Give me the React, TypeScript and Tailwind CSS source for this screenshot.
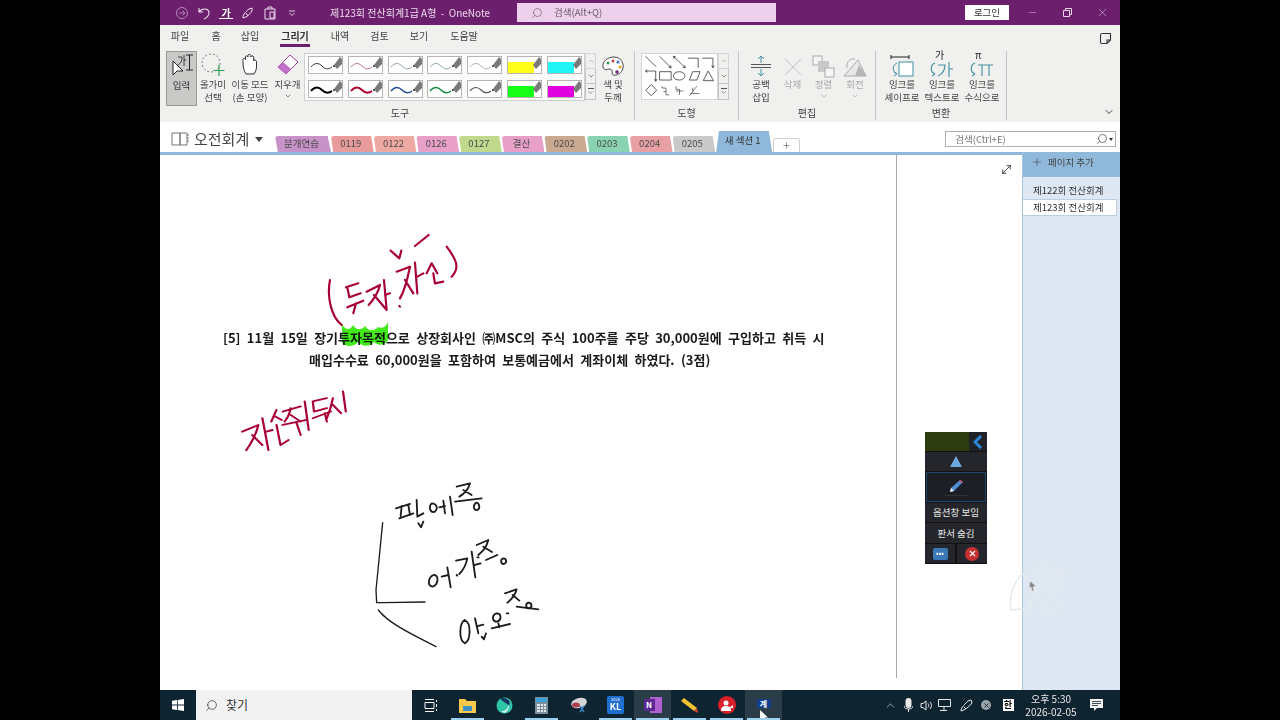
import { ChevronDown, ChevronUp, Minus, MoveDiagonal, Plus, Search, X } from 'lucide-react';

const menus = [
  { label: '파일', w: 'w-[40px]' },
  { label: '홈', w: 'w-[32px]' },
  { label: '삽입', w: 'w-[36px]' },
  { label: '그리기', w: 'w-[54px]', active: true },
  { label: '내역', w: 'w-[36px]' },
  { label: '검토', w: 'w-[43px]' },
  { label: '보기', w: 'w-[36px]' },
  { label: '도움말', w: 'w-[54px]' },
];

const penRows = [
  [
    { color: '#333333', size: 1 },
    { color: '#b57a88', size: 1 },
    { color: '#8fa3a3', size: 1 },
    { color: '#86a898', size: 1 },
    { color: '#b0b0b0', size: 1 },
    { color: '#ffff1a', fill: true },
    { color: '#22f5f5', fill: true },
  ],
  [
    { color: '#000000', size: 2 },
    { color: '#b0002e', size: 2 },
    { color: '#20508f', size: 1.5 },
    { color: '#128a44', size: 1.5 },
    { color: '#555555', size: 1.2 },
    { color: '#16ff16', fill: true },
    { color: '#e000e0', fill: true },
  ],
];

const tabs = [
  { label: '분개연습', bg: 'bg-[#c792c7]', w: 'w-[56px]' },
  { label: '0119', bg: 'bg-[#e99a9a]', w: 'w-[42.7px]' },
  { label: '0122', bg: 'bg-[#eeaaa2]', w: 'w-[42.7px]' },
  { label: '0126', bg: 'bg-[#e8a0c8]', w: 'w-[42.7px]' },
  { label: '0127', bg: 'bg-[#c0d98c]', w: 'w-[42.7px]' },
  { label: '결산', bg: 'bg-[#e8a0c8]', w: 'w-[42.7px]' },
  { label: '0202', bg: 'bg-[#c9a98f]', w: 'w-[42.7px]' },
  { label: '0203', bg: 'bg-[#8ad3b2]', w: 'w-[42.7px]' },
  { label: '0204', bg: 'bg-[#e8a0a4]', w: 'w-[42.7px]' },
  { label: '0205', bg: 'bg-[#c9c9c9]', w: 'w-[42.7px]' },
];

function PenSwatch({ color, size, fill }: { color: string; size?: number; fill?: boolean }) {
  return (
    <div className="w-[35px] h-[18px] bg-white border border-[#b5b5b5]">
      <svg width="33" height="16" viewBox="0 0 33 16">
        {fill ? (
          <rect x="0" y="5" width="26" height="11" fill={color} />
        ) : (
          <path d="M2 10C6 5 10 6 13 9S19 13 23 10" fill="none" stroke={color} strokeWidth={size} />
        )}
        {!fill && <circle cx="25" cy="9" r="1" fill="#222" />}
        <path d="M25 8L31 0L33 2L33 7L28 12Z" fill="#7a7a7a" />
      </svg>
    </div>
  );
}

function RibbonButton({ icon, lines, dim, caret, w }: { icon: React.ReactNode; lines: string[]; dim?: boolean; caret?: boolean; w: string }) {
  return (
    <div className={`flex flex-col items-center ${w}`}>
      <div className="h-[27px] flex items-center justify-center">{icon}</div>
      {lines.map((line) => (
        <div key={line} className={`text-[9.5px] leading-[13px] whitespace-nowrap ${dim ? 'text-[#a8a8a8]' : 'text-[#444]'}`}>
          {line}
        </div>
      ))}
      {caret && <ChevronDown size={8} className={dim ? 'text-[#a8a8a8] mt-[1px]' : 'text-[#444] mt-[1px]'} />}
    </div>
  );
}

function GalleryScroll() {
  return (
    <div className="flex flex-col w-[11px] h-[47px] text-[#555]">
      <div className="h-[16px] border border-[#d5d5d5] flex items-center justify-center text-[#aaa]">
        <ChevronUp size={8} />
      </div>
      <div className="h-[15px] border border-[#c5c5c5] border-t-0 flex items-center justify-center">
        <ChevronDown size={8} />
      </div>
      <div className="h-[16px] border border-[#c5c5c5] border-t-0 flex flex-col items-center justify-center">
        <div className="w-[6px] h-px bg-[#555] mb-[1px]" />
        <ChevronDown size={7} className="-mt-[1px]" />
      </div>
    </div>
  );
}

function GroupLabel({ children }: { children: React.ReactNode }) {
  return <div className="mt-auto mb-[1px] text-center text-[10px] leading-[13px] text-[#444]">{children}</div>;
}

function ShapesIcon() {
  return (
    <svg width="77" height="47" viewBox="8 25 232 140" fill="none" stroke="#333" strokeWidth="2.4" className="bg-white shrink-0 border border-[#d5d5d5]">
      <path d="M18 32L52 65M62 32L98 68M98 68L90 66M98 68L96 60M105 32L142 68M105 32L113 34M105 32L107 40M142 68L134 66M142 68L140 60" />
      <path d="M150 38H182V68M195 38H228V68M228 68L224 61M228 68L232 61" />
      <path d="M18 78H50V110M18 78L24 74M18 78L24 82M50 110L46 103M50 110L54 103" />
      <path d="M62 80H98V106H62ZM155 106L165 80H188L178 106ZM198 108L213 78L230 108Z" />
      <ellipse cx="123" cy="93" rx="18" ry="13" />
      <path d="M36 120L53 138L36 155L19 138Z" />
      <path d="M70 125V131H82V152H92M82 142H74" strokeWidth="2" />
      <path d="M113 125V135H124V152M113 140H136" strokeWidth="2" />
      <path d="M155 155L178 125M165 130V142M158 148H186" strokeWidth="2" />
    </svg>
  );
}

function InkConvertIcon({ top }: { top: string }) {
  return (
    <div className="relative w-[30px] h-[26px]">
      <div className="absolute top-[-3px] left-[8px] text-[10px] leading-[12px] text-[#222]">{top}</div>
      <svg width="30" height="26" viewBox="0 0 30 26" fill="none" stroke="#3f8fa0" strokeWidth="1.1">
        <path d="M8 11C3 13 3 20 8 22M8 22L5 20M8 22L5 24" />
        {top === 'π' ? (
          <path d="M11 13H26M15 13V24M22 13V24" />
        ) : (
          <path d="M11 13H18C18 18 15 22 11 24M22 10V25M22 17H26" />
        )}
      </svg>
    </div>
  );
}

function TaskIcon({ children, running, active }: { children: React.ReactNode; running?: boolean; active?: boolean }) {
  return (
    <div className={`relative w-[37px] h-[30px] shrink-0 flex items-center justify-center ${active ? 'bg-[#2a3c47]' : ''}`}>
      {children}
      {running && <div className="absolute bottom-0 left-[2px] right-[2px] h-[2px] bg-[#9bd0ef]" />}
    </div>
  );
}

export default function App() {
  return (
    <div className="w-[1280px] h-[720px] bg-black flex justify-center overflow-hidden font-['Noto_Sans_CJK_KR','Liberation_Sans',sans-serif]">
      <div className="w-[960px] h-[720px] flex flex-col bg-white relative">
        {/* Title bar */}
        <div className="h-[25px] bg-[#6b1f6d] flex items-center text-[#ecdcec] relative">
          <div className="w-[170px] flex items-center pl-[15px] gap-[8px]">
            <svg width="14" height="14" viewBox="0 0 14 14" fill="none" stroke="#b78ab8" strokeWidth="1">
              <circle cx="7" cy="7" r="5.5" />
              <path d="M4 7H10M7.5 4.5L10 7L7.5 9.5" />
            </svg>
            <svg width="14" height="14" viewBox="0 0 14 14" fill="none" stroke="#f0e0f0" strokeWidth="1.1">
              <path d="M2 2V6H6M2 6C5 2 11 2 12 6C12.5 9 10 12 7 13" />
            </svg>
            <span className="w-[14px] text-[10px] leading-[11px] font-bold text-white border-b border-white text-center">가</span>
            <svg width="14" height="14" viewBox="0 0 14 14" fill="none" stroke="#f0e0f0" strokeWidth="1">
              <path d="M2 12C2 9 3 7 8 3L11 2L11 5C8 9 6 11 2 12ZM5 7L7 10" />
            </svg>
            <svg width="14" height="14" viewBox="0 0 14 14" fill="none" stroke="#f0e0f0" strokeWidth="1">
              <path d="M2 3H12V13H2ZM5 3V1H9V3M7 6H11V12H7Z" />
            </svg>
            <svg width="6" height="6" viewBox="0 0 6 6" fill="none" stroke="#e0c8e0" className="ml-[4px]">
              <path d="M0 1H6M0.5 3L3 5.5L5.5 3" />
            </svg>
          </div>
          <div className="w-[158px] text-[10px] whitespace-pre">제123회 전산회계1급 A형  -  OneNote</div>
          <div className="ml-[29px] w-[259px] h-[19px] bg-[#ecd0ec] flex items-center pl-[14px] gap-[11px] text-[#6b5a6b]">
            <Search size={12} className="-scale-x-100" strokeWidth={1.3} />
            <span className="text-[9.5px]">검색(Alt+Q)</span>
          </div>
          <div className="ml-[189px] w-[44px] h-[15px] bg-white text-[#333] text-[9.5px] leading-[15px] text-center">로그인</div>
          <div className="flex items-center ml-[6px] text-[#e6d6e6]">
            <div className="w-[35px] flex justify-center"><Minus size={11} strokeWidth={1} /></div>
            <div className="w-[35px] flex justify-center">
              <svg width="9" height="9" viewBox="0 0 9 9" fill="none" stroke="currentColor">
                <path d="M2.5 2.5V.5H8.5V6.5H6.5M.5 2.5H6.5V8.5H.5Z" />
              </svg>
            </div>
            <div className="w-[35px] flex justify-center"><X size={13} strokeWidth={1} /></div>
          </div>
        </div>

        {/* Menu row */}
        <div className="h-[22px] bg-[#f0f0ee] flex items-start text-[10px] text-[#444] relative">
          {menus.map((menu) => (
            <div key={menu.label} className={`${menu.w} h-[22px] flex justify-center pt-[3px] ${menu.active ? 'font-bold text-[#333]' : ''}`}>
              <span className={`h-[19px] ${menu.active ? 'border-b-[3px] border-[#6b1f6d] px-[1px]' : ''}`}>{menu.label}</span>
            </div>
          ))}
          <svg width="13" height="13" viewBox="0 0 13 13" fill="none" stroke="#333" strokeWidth="1.1" className="ml-auto mr-[8px] mt-[7px]">
            <path d="M1.5 3.5C1.5 1.5 2 1.5 3 1.5H11.5V8L8 11.5H3C2 11.5 1.5 11 1.5 10ZM8 11.5V8H11.5" />
          </svg>
        </div>

        {/* Ribbon */}
        <div className="h-[75px] bg-[#f0f0ee] flex pl-[6px] shadow-[0_1px_2px_rgba(0,0,0,0.15)] relative">
          <div className="w-[469px] flex flex-col border-r border-[#c5c5c5] mt-[4px] mb-[2px]">
            <div className="flex items-start">
              <div className="w-[31px] h-[55px] bg-[#c9c9c7] border border-[#9a9a98] flex flex-col items-center text-[9.5px] text-[#333]">
                <svg width="26" height="26" viewBox="0 0 26 26" fill="none" stroke="#222" strokeWidth="1">
                  <path d="M4 9V23L8 19H14Z" fill="white" />
                  <path d="M17 3H24M20.5 3V18M17 18H24" />
                  <path d="M9 5H13C13 9 12 11 9 13M15 3V14M15 8H17" strokeWidth="0.8" />
                </svg>
                <span className="mt-[1px] leading-[13px]">입력</span>
              </div>
              <RibbonButton
                w="w-[32px]"
                lines={['올가미', '선택']}
                icon={
                  <svg width="26" height="26" viewBox="0 0 26 26" fill="none">
                    <circle cx="11" cy="11" r="9" stroke="#777" strokeDasharray="2 2" />
                    <path d="M19 13V24M13.5 18.5H24.5" stroke="#2f9e4f" strokeWidth="1.2" />
                  </svg>
                }
              />
              <RibbonButton
                w="w-[42px]"
                lines={['이동 모드', '(손 모양)']}
                icon={
                  <svg width="18" height="23" viewBox="0 0 18 23" fill="white" stroke="#333" strokeWidth="1">
                    <path d="M5 21C3 18 2 14 2 10V6.5C2 5 4 5 4.5 6.5V4C4.5 2.5 6.7 2.5 7 4V2.5C7 1 9.5 1 9.8 2.5V4C10 2.5 12.5 2.5 12.7 4V8C13 6.5 15.5 7 15.5 8.5V13C15.5 16 15 18 13 21Z" />
                  </svg>
                }
              />
              <RibbonButton
                w="w-[33px]"
                caret
                lines={['지우개']}
                icon={
                  <svg width="22" height="22" viewBox="0 0 22 22">
                    <path d="M1 13L13 1L21 8L9 20Z" fill="white" stroke="#a040a0" />
                    <path d="M1 13L6 8L14 15L9 20Z" fill="#c070c8" />
                  </svg>
                }
              />
              <div className="flex flex-col justify-between w-[281px] h-[48px] mt-[2px] bg-[#fafaf9] border border-[#d0d0d0] pl-[3px] py-[2px]">
                {penRows.map((row, r) => (
                  <div key={r} className="flex gap-[4.8px]">
                    {row.map((pen, i) => (
                      <PenSwatch key={i} color={pen.color} size={pen.size} fill={pen.fill} />
                    ))}
                  </div>
                ))}
              </div>
              <div className="mt-[2px]"><GalleryScroll /></div>
              <RibbonButton
                w="w-[34px]"
                lines={['색 및', '두께']}
                icon={
                  <svg width="24" height="24" viewBox="0 0 24 24" fill="white" stroke="#444" strokeWidth="1" className="mt-[5px]">
                    <path d="M2 12C1 6 7 2 13 2C19 2 23 7 22 13C21 18 16 21 12 20C10 19 13 15 9 14C6 14 3 16 2 12Z" />
                    <circle cx="7" cy="8" r="1.5" fill="#2f9e4f" stroke="none" />
                    <circle cx="12" cy="6" r="1.5" fill="#d83b3b" stroke="none" />
                    <circle cx="17" cy="7" r="1.5" fill="#2f6fd8" stroke="none" />
                    <circle cx="19" cy="12" r="1.5" fill="#e0a020" stroke="none" />
                    <circle cx="16" cy="17" r="1.8" fill="#702080" stroke="none" />
                  </svg>
                }
              />
            </div>
            <GroupLabel>도구</GroupLabel>
          </div>

          <div className="w-[104px] flex flex-col border-r border-[#c5c5c5] mt-[4px] mb-[2px]">
            <div className="flex pl-[6px] mt-[2px]">
              <ShapesIcon />
              <GalleryScroll />
            </div>
            <GroupLabel>도형</GroupLabel>
          </div>

          <div className="w-[137px] flex flex-col border-r border-[#c5c5c5] mt-[4px] mb-[2px]">
            <div className="flex pl-[6px]">
              <RibbonButton
                w="w-[32px]"
                lines={['공백', '삽입']}
                icon={
                  <svg width="22" height="24" viewBox="0 0 22 24" fill="none" stroke="#3f8fa0" className="mt-[2px]">
                    <path d="M11 2V9M8 5L11 2L14 5M11 15V22M8 19L11 22L14 19" />
                    <path d="M1 10.5H21M1 13.5H21" stroke="#555" />
                  </svg>
                }
              />
              <RibbonButton
                w="w-[31px]"
                dim
                lines={['삭제']}
                icon={
                  <svg width="18" height="18" viewBox="0 0 18 18" stroke="#c2c2c2" className="mt-[4px]">
                    <path d="M1 1L17 17M17 1L1 17" />
                  </svg>
                }
              />
              <RibbonButton
                w="w-[31px]"
                dim
                caret
                lines={['정렬']}
                icon={
                  <svg width="23" height="23" viewBox="0 0 23 23" stroke="#aaa" className="mt-[4px]">
                    <rect x="1" y="1" width="9" height="9" fill="#f5f5f5" />
                    <rect x="6" y="6" width="11" height="11" fill="#c8c8c8" stroke="none" />
                    <rect x="13" y="13" width="9" height="9" fill="#f5f5f5" />
                  </svg>
                }
              />
              <RibbonButton
                w="w-[32px]"
                dim
                caret
                lines={['회전']}
                icon={
                  <svg width="24" height="20" viewBox="0 0 24 20" fill="none" stroke="#aaa" className="mt-[4px]">
                    <path d="M1 19L15 3L23 19Z" fill="#e8e8e8" />
                    <path d="M12 19L16 8L23 19Z" fill="#b5b5b5" stroke="none" />
                    <path d="M4 11C3 5 7 1 12 2" />
                  </svg>
                }
              />
            </div>
            <GroupLabel>편집</GroupLabel>
          </div>

          <div className="w-[131px] flex flex-col border-r border-[#c5c5c5] mt-[4px] mb-[2px]">
            <div className="flex pl-[6px]">
              <RibbonButton
                w="w-[40px]"
                lines={['잉크를', '셰이프로']}
                icon={
                  <svg width="24" height="24" viewBox="0 0 24 24" fill="none" className="mt-[3px]">
                    <path d="M1 1V5M19 1V5M1 3H19" stroke="#222" />
                    <rect x="9" y="8" width="14" height="14" stroke="#3f8fa0" fill="white" />
                    <path d="M7 9C2 11 2 18 7 20M7 20L4 18M7 20L4 22" stroke="#3f8fa0" />
                  </svg>
                }
              />
              <RibbonButton w="w-[40px]" lines={['잉크를', '텍스트로']} icon={<InkConvertIcon top="가" />} />
              <RibbonButton w="w-[40px]" lines={['잉크를', '수식으로']} icon={<InkConvertIcon top="π" />} />
            </div>
            <GroupLabel>변환</GroupLabel>
          </div>

          <ChevronDown size={12} className="ml-auto mr-[5px] mt-[59px] text-[#444]" />
        </div>

        {/* Section tabs */}
        <div className="h-[30px] bg-white flex items-end relative">
          <div className="w-[115px] h-[30px] shrink-0 flex items-center pl-[11px] pt-[3px] text-[#444]">
            <svg width="18" height="14" viewBox="0 0 18 14" fill="none" stroke="#777" className="shrink-0">
              <path d="M1 1H9V13H1ZM9 1H16V13H9ZM16 3H18M16 6H18M16 9H18" />
            </svg>
            <span className="ml-[5px] text-[15px] leading-[20px] whitespace-nowrap">오전회계</span>
            <span className="ml-[6px] w-0 h-0 border-x-[4px] border-x-transparent border-t-[5px] border-t-[#444] mt-[2px] shrink-0" />
          </div>
          {tabs.map((tab) => (
            <div
              key={tab.label}
              className={`${tab.w} ${tab.bg} h-[16px] pr-[3px] text-[9.5px] leading-[14px] text-center text-[#4a4a4a] rounded-t-[3px] [clip-path:polygon(0_0,94%_0,100%_100%,5%_100%)]`}
            >
              {tab.label}
            </div>
          ))}
          <div className="w-[56px] h-[21px] ml-[1px] bg-[#8fb8da] pr-[3px] text-[9.5px] leading-[19px] text-center text-[#333] rounded-t-[4px] [clip-path:polygon(5%_0,94%_0,100%_100%,0_100%)]">
            새 섹션 1
          </div>
          <div className="w-[27px] h-[14px] ml-[1px] border border-b-0 border-[#d0d0d0] rounded-t-[3px] flex items-center justify-center text-[#444]">
            <Plus size={9} strokeWidth={1.5} />
          </div>
          <div className="ml-[145px] mb-[5px] w-[171px] h-[16px] border border-[#b0b0b0] flex items-center justify-between pl-[9px] pr-[2px] text-[#777]">
            <span className="text-[9.5px] leading-[14px]">검색(Ctrl+E)</span>
            <span className="flex items-center text-[#333]">
              <Search size={12} className="-scale-x-100" strokeWidth={1.3} />
              <span className="ml-[1px] w-0 h-0 border-x-[2px] border-x-transparent border-t-[3px] border-t-[#333]" />
            </span>
          </div>
        </div>
        <div className="h-[3px] bg-[#8fb8da]" />

        {/* Page area */}
        <div className="h-[535px] flex relative bg-white">
          <div className="w-[737px] flex relative">
            <div className="w-[736px] flex flex-col pt-[172px] text-[13px] leading-[22px] font-semibold text-[#1a1a1a] [word-spacing:3.4px]">
              <div className="pl-[63px] whitespace-nowrap">[5] 11월 15일 장기투자목적으로 상장회사인 ㈜MSC의 주식 100주를 주당 30,000원에 구입하고 취득 시</div>
              <div className="pl-[149px] whitespace-nowrap">매입수수료 60,000원을 포함하여 보통예금에서 계좌이체 하였다. (3점)</div>
            </div>
            <div className="w-px h-[523px] bg-[#a8a8a8]" />

            {/* Ink layer */}
            <svg width="737" height="535" viewBox="160 155 737 535" fill="none" strokeLinecap="round" strokeLinejoin="round" className="absolute left-0 top-0 mix-blend-multiply">
              <path d="M342 343V324C345 330 350 331 353 325C356 330 361 331 365 326C368 331 374 332 378 327C382 329 386 327 388 322V340C384 346 378 346 374 342C370 347 362 347 358 342C354 347 346 347 342 343Z" fill="#42ea1c" />
              <g transform="translate(230 230) scale(0.3333)" stroke="#a80034" strokeWidth="6.5">
                <path d="M300 150C292 190 298 255 335 285" />
                <path d="M348 172L385 160M352 172L358 202L392 190M352 232L400 212M378 220L370 250" />
                <path d="M410 185L450 165C445 185 430 210 416 225M432 195L470 240M462 150L470 240M465 195L480 190" />
                <path d="M508 228L510 230" />
                <path d="M482 62L508 85L514 62M500 125L540 110C532 150 522 185 510 205M525 150L550 190M555 98L562 190M562 140L580 130" />
                <path d="M555 48L596 15M590 130L605 100L622 130M610 130L615 160L640 155" />
                <path d="M650 50C672 80 695 110 665 140" />
              </g>
              <g transform="translate(210 220) scale(0.403 0.336)" stroke="#a80034" strokeWidth="5.5">
                <path d="M80 630L120 610C115 635 105 660 90 685M105 640L130 670M130 590L145 685M140 630L155 625" />
                <path d="M165 565L152 600M162 585L178 595M165 610L175 670L195 655" />
                <path d="M180 570L225 555M200 560C198 575 192 590 185 600M200 580L225 600M180 610L240 595M215 605L225 640" />
                <path d="M235 540L245 625" />
                <path d="M255 540L290 530M255 540L258 570L290 560M255 590L300 570M285 575L290 600" />
                <path d="M305 530C302 550 296 572 290 590M305 550L325 575M330 510L337 570" />
              </g>
              <g transform="translate(360 480) scale(0.3333)" stroke="#1c1c1c" strokeWidth="5.5">
                <path d="M68 128L48 330L50 368L70 368L195 366M55 390C85 430 160 465 228 500" strokeWidth="4" />
                <path d="M108 85L150 72M125 78L122 108M145 75L150 105M118 115L160 100M170 60L172 110L190 100M175 130L183 142L190 125" />
                <path d="M215 70C205 80 210 100 225 95C235 85 230 70 215 70ZM250 62L255 100M238 82L255 78M270 50L278 105" />
                <path d="M290 20L330 10C325 30 312 42 298 50M310 30L335 45M285 65L365 55" />
                <path d="M348 68C338 75 340 92 352 90C362 85 358 68 348 68Z" />
                <path d="M222 285C205 290 200 320 218 320C235 315 238 285 222 285ZM262 262L272 322M245 290L265 285M290 285L292 287" />
                <path d="M288 242L322 235C318 255 310 270 298 282M335 215L346 292M345 255L362 250M352 232L356 232" />
                <path d="M350 195L385 180C380 200 368 215 355 225M370 200L396 216M378 240L412 225" />
                <path d="M430 235C420 238 422 252 432 252C442 248 440 235 430 235Z" />
                <path d="M314 420C298 430 295 480 315 490C332 480 335 430 314 420ZM345 415L355 460M355 438L370 434M365 470L372 478L378 460" />
                <path d="M410 400C395 405 395 425 412 425C425 420 425 400 410 400ZM395 445L450 432M415 430L418 442M440 400L445 400" />
                <path d="M435 340L470 328C466 345 455 358 442 368M458 345L478 362M470 380L535 388" />
                <path d="M505 368C495 372 497 385 508 385C518 382 516 368 505 368Z" />
              </g>
            </svg>
          </div>

          <div className="w-[125px] flex justify-end pt-[8px] pr-[9px]">
            <MoveDiagonal size={13} strokeWidth={1.5} className="text-[#222]" />
          </div>

          {/* Page list */}
          <div className="w-[98px] bg-[#dde8f3] border-l border-[#a9c3da] -mt-[3px] flex flex-col text-[9.5px] text-[#333]">
            <div className="h-[25px] bg-[#8fb8da] flex items-start pt-[3px] pl-[8px] gap-[5px] text-[#444]">
              <Plus size={12} strokeWidth={1.2} className="mt-[1px]" />
              <span>페이지 추가</span>
            </div>
            <div className="h-[22px] pl-[10px] flex items-end leading-[17px]">제122회 전산회계</div>
            <div className="h-[17px] w-[94px] bg-white border border-[#b9cfe3] border-l-0 pl-[10px] leading-[15px]">제123회 전산회계</div>
          </div>

          {/* Floating pen toolbar */}
          <div className="absolute left-[765px] top-[277px] w-[62px] h-[132px] bg-[#111] flex flex-col gap-[1px] text-[9.5px] text-[#e8e8e8] text-center">
            <div className="flex h-[19px]">
              <div className="w-[44px] bg-[#2e3c10]" />
              <div className="flex-1 bg-[#1f2328] flex items-center justify-center">
                <svg width="10" height="14" viewBox="0 0 10 14" fill="none" stroke="#2a86d8" strokeWidth="3">
                  <path d="M8 1L2 7L8 13" />
                </svg>
              </div>
            </div>
            <div className="h-[19px] bg-[#24262b] flex items-center justify-center">
              <div className="w-0 h-0 border-x-[6px] border-x-transparent border-b-[11px] border-b-[#6ea8e0]" />
            </div>
            <div className="h-[30px] mx-[1px] bg-[#1c2026] border border-[#23466b] flex flex-col items-center justify-center">
              <svg width="16" height="16" viewBox="0 0 16 16">
                <path d="M2 14L3 10L12 2L15 4L6 13Z" fill="#4d8fd8" />
                <path d="M2 14L3 10L6 13Z" fill="#f2f2f2" />
                <path d="M12 2L15 4L14 5L11 3Z" fill="#e05050" />
              </svg>
              <div className="w-[22px] h-px bg-[#333] mt-[1px]" />
            </div>
            <div className="h-[19px] bg-[#24262b] leading-[19px]">옵션창 보임</div>
            <div className="h-[20px] bg-[#24262b] leading-[20px]">판서 숨김</div>
            <div className="flex h-[19px] gap-[2px]">
              <div className="w-[30px] bg-[#24262b] flex items-center justify-center">
                <div className="relative w-[15px] h-[12px] bg-[#3a78b8] rounded-[2px] text-[8px] leading-[9px] text-white">•••</div>
              </div>
              <div className="flex-1 bg-[#24262b] flex items-center justify-center">
                <div className="w-[14px] h-[14px] rounded-full bg-[#c83030] flex items-center justify-center">
                  <X size={9} strokeWidth={3} className="text-white" />
                </div>
              </div>
            </div>
          </div>

          {/* Faded radial menu and cursor */}
          <svg width="62" height="62" viewBox="0 0 62 62" fill="none" stroke="#e6eaed" className="absolute left-[849px] top-[409px]">
            <path d="M26 6C33 3 46 3 55 7L47 25C42 23 37 23 33 25Z" strokeWidth="1.5" />
            <path d="M14 10L28 25C22 30 22 38 22 44L2 46C0 32 4 18 14 10Z" strokeWidth="1.5" />
            <circle cx="40" cy="42" r="8" />
            <path d="M32 7H50M35 13H48" />
            <path d="M21 17L27 22L24 23L25 27L23 27L22 23L20 24Z" fill="#8a8a8a" stroke="#f0f0f0" strokeWidth="0.5" />
          </svg>
        </div>

        {/* Taskbar */}
        <div className="h-[30px] bg-[#0f2431] flex items-center relative">
          <div className="w-[36px] shrink-0 flex justify-center">
            <svg width="12" height="12" viewBox="0 0 12 12" fill="#fff">
              <path d="M0 1.8L5 1V5.6H0ZM5.8 .9L12 0V5.6H5.8ZM0 6.4H5V11L0 10.2ZM5.8 6.4H12V12L5.8 11.1Z" />
            </svg>
          </div>
          <div className="w-[216px] h-[30px] shrink-0 bg-[#f2f2f2] flex items-center pl-[9px] gap-[8px] text-[#333]">
            <Search size={13} className="-scale-x-100" strokeWidth={1.3} />
            <span className="text-[12px]">찾기</span>
          </div>
          <div className="flex">
            <TaskIcon>
              <svg width="13" height="13" viewBox="0 0 13 13" fill="none" stroke="#fff">
                <path d="M1 .5H10M1 3.5H10V9.5H1ZM1 12.5H10M12.5 1V3M12.5 5V8M12.5 10V12" />
              </svg>
            </TaskIcon>
            <TaskIcon running>
              <svg width="17" height="15" viewBox="0 0 17 15">
                <path d="M0 1H6L8 3H17V15H0Z" fill="#f6c94a" />
                <rect x="4" y="8" width="9" height="5" fill="#3f92c8" />
              </svg>
            </TaskIcon>
            <TaskIcon>
              <svg width="17" height="17" viewBox="0 0 17 17">
                <circle cx="8.5" cy="8.5" r="8" fill="#2ec4a8" />
                <path d="M4 1.5C9 0 16 3 13 9C11 6 7 5 4 1.5Z" fill="#17325e" />
                <path d="M5 14C9 15 13 11 12 7C14 10 12 15 8 16Z" fill="#eaf6f4" />
              </svg>
            </TaskIcon>
            <TaskIcon running>
              <svg width="13" height="17" viewBox="0 0 13 17">
                <rect width="13" height="17" fill="#7c8f9c" />
                <rect x="1" y="1" width="11" height="4" fill="#3aa0d8" />
                <path d="M2 7H5V9H2ZM6 7H8V9H6ZM9 7H11V9H9ZM2 10H5V12H2ZM6 10H8V12H6ZM9 10H11V12H9ZM2 13H5V15H2ZM6 13H8V15H6ZM9 13H11V15H9Z" fill="#e8e8e8" />
              </svg>
            </TaskIcon>
            <TaskIcon>
              <svg width="18" height="17" viewBox="0 0 18 17">
                <ellipse cx="9" cy="6" rx="8" ry="5" fill="#d5d5d8" transform="rotate(-15 9 6)" />
                <ellipse cx="6" cy="8" rx="4" ry="2.5" fill="#b04050" />
                <path d="M10 9L14 15M14 9L10 15" stroke="#3a7fc0" strokeWidth="1.5" />
              </svg>
            </TaskIcon>
            <TaskIcon running>
              <div className="w-[17px] h-[18px] rounded-[2px] bg-[#1f6fd0] text-white text-center">
                <div className="text-[4px] leading-[6px]">2026</div>
                <div className="text-[9px] leading-[10px] font-bold">KL</div>
              </div>
            </TaskIcon>
            <TaskIcon running active>
              <div className="relative w-[18px] h-[16px]">
                <div className="absolute right-0 top-0 w-[12px] h-[16px] bg-[#b060d0]" />
                <div className="absolute left-0 top-[2px] w-[11px] h-[12px] bg-[#5a2a90] text-white text-[8px] leading-[12px] font-bold text-center">N</div>
              </div>
            </TaskIcon>
            <TaskIcon running>
              <svg width="17" height="15" viewBox="0 0 17 15">
                <path d="M0 3L3 0L16 10L13 13Z" fill="#f2c230" />
                <path d="M13 13L16 10L17 15Z" fill="#d84a30" />
              </svg>
            </TaskIcon>
            <TaskIcon running>
              <div className="w-[18px] h-[18px] rounded-full bg-[#d8202a] flex items-center justify-center">
                <svg width="12" height="11" viewBox="0 0 12 11" fill="#fff">
                  <circle cx="5" cy="3" r="2.5" />
                  <path d="M0 11C0 7 2 6 5 6C8 6 10 7 10 11ZM8 8L12 5V8Z" />
                </svg>
              </div>
            </TaskIcon>
            <TaskIcon running active>
              <div className="w-[14px] h-[9px] -mt-[3px] bg-[#123f8a] text-white text-[8px] leading-[9px] font-bold text-center">계</div>
              <svg width="10" height="12" viewBox="0 0 10 12" className="absolute left-[14px] top-[20px]">
                <path d="M1 0V10L3.5 8L6 12H7.5L6 7.5H9Z" fill="#fff" />
              </svg>
            </TaskIcon>
          </div>

          <div className="flex items-center ml-[99px] text-[#e8e8e8]">
            <div className="w-[18px] flex justify-center"><ChevronUp size={13} strokeWidth={1.2} /></div>
            <div className="w-[18px] flex justify-center">
              <svg width="9" height="14" viewBox="0 0 9 14" fill="#e8e8e8">
                <rect x="1.5" y="0" width="6" height="10" rx="3" />
                <path d="M0 8C0 12 9 12 9 8M4.5 11V14" fill="none" stroke="#e8e8e8" />
              </svg>
            </div>
            <div className="w-[18px] flex justify-center">
              <svg width="13" height="11" viewBox="0 0 13 11" fill="none" stroke="#e8e8e8">
                <path d="M1 3.5H3L6 1V10L3 7.5H1ZM8 3.5C9 4.5 9 6.5 8 7.5M10 2C12 4 12 7 10 9" />
              </svg>
            </div>
            <div className="w-[18px] flex justify-center">
              <svg width="13" height="12" viewBox="0 0 13 12" fill="none" stroke="#e8e8e8">
                <path d="M.5 .5H12.5V7.5H.5ZM6 7.5V11.5M2 11.5H9" />
              </svg>
            </div>
            <div className="w-[26px] flex justify-center">
              <svg width="13" height="13" viewBox="0 0 13 13" fill="none" stroke="#e8e8e8">
                <path d="M1 12C1 9 3 7 8 2L11 1L12 4C9 8 5 11 1 12ZM4 8L6 10" />
              </svg>
            </div>
            <div className="w-[14px] flex justify-center">
              <div className="w-[10px] h-[10px] rounded-full bg-[#9aa3a8] flex items-center justify-center">
                <X size={7} strokeWidth={3} className="text-[#0f2431]" />
              </div>
            </div>
            <div className="w-[30px] flex justify-center">
              <span className="w-[11px] h-[12px] bg-white text-black text-[9px] leading-[12px] font-bold text-center">한</span>
            </div>
            <div className="w-[56px] text-center text-[10px] leading-[13px] whitespace-nowrap">
              <div>오후 5:30</div>
              <div>2026-02-05</div>
            </div>
            <div className="w-[34px] flex justify-center">
              <svg width="13" height="12" viewBox="0 0 13 12" fill="#f4f4f4">
                <path d="M0 0H13V9H7L4 12V9H0Z" />
                <path d="M2 2.5H11M2 4.5H11M2 6.5H8" stroke="#0f2431" strokeWidth="0.8" />
              </svg>
            </div>
          </div>
        </div>
      </div>
    </div>
  );
}
